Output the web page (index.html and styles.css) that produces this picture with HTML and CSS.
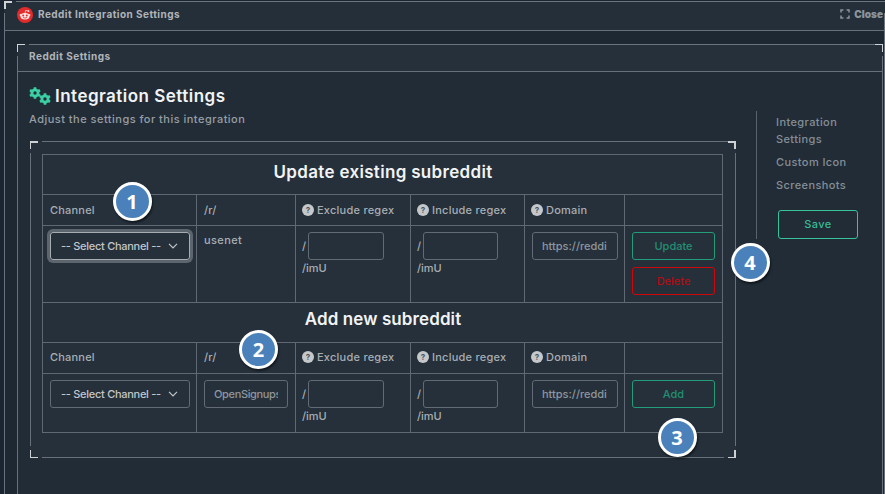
FILE: index.html
```html
<!DOCTYPE html>
<html lang="en">
<head>
<meta charset="utf-8">
<title>Reddit Integration Settings</title>
<link rel="stylesheet" href="styles.css">
</head>
<body>
<svg class="sprite" width="0" height="0" aria-hidden="true">
  <symbol id="gear" viewBox="0 0 12 12">
    <path fill="none" stroke="currentColor" stroke-width="2.6" d="M6 .2v3M6 8.8v3M1 3.1l2.5 1.5M8.500 7.400l2.500 1.500M11 3.100L8.500 4.600M3.500 7.400L1 8.900"/>
    <circle cx="6" cy="6" r="3.1" fill="none" stroke="currentColor" stroke-width="2.8"/>
  </symbol>
  <symbol id="chevron" viewBox="0 0 10 6"><path d="M1 .8l4 4 4-4" fill="none" stroke="currentColor" stroke-width="1.2"/></symbol>
</svg>
<main class="window frame">
  <header class="window-bar">
    <svg class="reddit" viewBox="0 0 16 16">
      <circle cx="8" cy="8" r="8" fill="#e32b2b"/>
      <g fill="#fbe4e4"><circle cx="3.700" cy="8" r="1.100"/><circle cx="12.300" cy="8" r="1.100"/><ellipse cx="8" cy="9.200" rx="4.500" ry="3.200"/><circle cx="11.500" cy="4.100" r=".9"/></g>
      <path d="M8 6.200l.7-2.800 2.600.6" fill="none" stroke="#fbe4e4" stroke-width=".7"/>
      <g fill="#e32b2b"><circle cx="6.200" cy="8.400" r="1"/><circle cx="9.800" cy="8.400" r="1"/></g>
      <path d="M6 10.500q2 1.200 4 0" fill="none" stroke="#e32b2b" stroke-width=".8"/>
    </svg>
    <span class="window-title">Reddit Integration Settings</span>
    <span class="close"><svg viewBox="0 0 10 10"><path d="M1 3.400V1h2.400M6.600 1H9v2.400M9 6.600V9H6.600M3.400 9H1V6.600" fill="none" stroke="currentColor" stroke-width="1.500"/></svg><b>Close</b></span>
  </header>
  <section class="panel frame">
    <h2 class="panel-title">Reddit Settings</h2>
    <div class="content">
      <div class="main">
        <h1 class="heading"><span class="gears"><svg><use href="#gear"/></svg><svg><use href="#gear"/></svg></span><span>Integration Settings</span></h1>
        <p class="lead">Adjust the settings for this integration</p>
        <div class="box frame">
          <div class="table">
            <div class="cell caption cap-update"><span>Update existing subreddit</span></div>
            <div class="cell th first">Channel</div><div class="cell th first">/r/</div>
            <div class="cell th first tip"><i>?</i>Exclude regex</div><div class="cell th first tip"><i>?</i>Include regex</div><div class="cell th first tip"><i>?</i>Domain</div><div class="cell th"></div>
            <div class="cell"><div class="select focus"><span>-- Select Channel --</span><svg><use href="#chevron"/></svg></div></div>
            <div class="cell name">usenet</div>
            <div class="cell regex"><div><span>/</span><div class="input"></div></div><p>/imU</p></div>
            <div class="cell regex"><div><span>/</span><div class="input narrow"></div></div><p>/imU</p></div>
            <div class="cell"><div class="input"><span>https://reddi</span></div></div>
            <div class="cell actions"><div class="btn">Update</div><div class="btn danger">Delete</div></div>

            <div class="cell caption cap-add"><span>Add new subreddit</span></div>
            <div class="cell th">Channel</div><div class="cell th">/r/</div>
            <div class="cell th tip"><i>?</i>Exclude regex</div><div class="cell th tip"><i>?</i>Include regex</div><div class="cell th tip"><i>?</i>Domain</div><div class="cell th"></div>
            <div class="cell"><div class="select"><span>-- Select Channel --</span><svg><use href="#chevron"/></svg></div></div>
            <div class="cell"><div class="input sub"><span>OpenSignups</span></div></div>
            <div class="cell regex"><div><span>/</span><div class="input"></div></div><p>/imU</p></div>
            <div class="cell regex"><div><span>/</span><div class="input narrow"></div></div><p>/imU</p></div>
            <div class="cell"><div class="input"><span>https://reddi</span></div></div>
            <div class="cell actions"><div class="btn">Add</div></div>
          </div>
        </div>
      </div>
      <nav class="side">
        <a>Integration Settings</a><a>Custom Icon</a><a>Screenshots</a>
        <div class="btn save">Save</div>
      </nav>
    </div>
  </section>
</main>
<div class="badge b1">1</div><div class="badge b2">2</div><div class="badge b3">3</div><div class="badge b4">4</div>
</body>
</html>
```
FILE: styles.css
```css
* { box-sizing: border-box; }
body { margin: 0; width: 885px; height: 494px; overflow: hidden; display: flow-root; background: #1b2431; color: #a9aeb3; font: 500 11px/17px Inter, "Liberation Sans", sans-serif; }
h1, h2, p { margin: 0; }
.sprite { position: absolute; }
.frame {
  --line: #68717b; --mark: #cfd2d5;
  --tlh: 1px; --tlv: 1px; --trh: 1px; --trv: 1px; --brv: 1px;
  --bottom: 1px; --right: 1px; --side: 50% / 1px calc(100% - 24px);
  background:
    linear-gradient(var(--mark), var(--mark)) 0 0 / 8px var(--tlh),
    linear-gradient(var(--mark), var(--mark)) 0 0 / var(--tlv) 8px,
    linear-gradient(var(--mark), var(--mark)) 100% 0 / 8px var(--trh),
    linear-gradient(var(--mark), var(--mark)) 100% 0 / var(--trv) 8px,
    linear-gradient(var(--mark), var(--mark)) 0 100% / 8px var(--bottom),
    linear-gradient(var(--mark), var(--mark)) 0 100% / 1px calc(var(--bottom) * 8),
    linear-gradient(var(--mark), var(--mark)) 100% 100% / 8px var(--bottom),
    linear-gradient(var(--mark), var(--mark)) 100% 100% / var(--brv) calc(var(--bottom) * 8),
    linear-gradient(var(--line), var(--line)) 12px 0 / calc(100% - 24px * var(--inset, 1)) 1px,
    linear-gradient(var(--line), var(--line)) 50% 100% / calc(100% - 24px) var(--bottom),
    linear-gradient(var(--line), var(--line)) 0 var(--side),
    linear-gradient(var(--line), var(--line)) 100% var(--side);
  background-repeat: no-repeat;
  background-color: var(--fill);
}
.window { --fill: #1e2833; --tlh: 2px; --tlv: 2px; --trh: 0px; --trv: 0px; --inset: 0; --bottom: 0px; --side: 12px / 1px 100%; margin: 1px 0 0 4px; width: 881px; height: 493px; }
.window-bar { display: flex; align-items: center; height: 30px; padding: 0 2px 3px 13px; border-bottom: 1px solid #68717b; background: rgba(255,255,255,.035); font-weight: 700; font-size: 10px; }
.reddit { width: 16px; height: 16px; margin-right: 5px; position: relative; top: 1px; }
.window-title { white-space: nowrap; letter-spacing: .45px; color: #b0b4b8; }
.close { margin-left: auto; display: flex; align-items: center; gap: 4px; color: #8d949b; }
.close svg { width: 10px; height: 10px; }
.panel { --fill: #212c37; --bottom: 0px; --side: 12px / 1px 100%; margin: 13px 0 0 13px; width: 866px; height: 450px; }
.panel-title { height: 28px; border-bottom: 1px solid #68717b; padding: 4px 12px; font-size: 10px; font-weight: 700; letter-spacing: .5px; background: rgba(255,255,255,.025); color: #b0b4b8; }
.content { display: flex; }
.main { width: 706px; margin-left: 13px; padding-top: 12px; }
.heading { display: flex; align-items: center; height: 24px; margin-left: -1px; font-size: 17px; font-weight: 600; letter-spacing: .48px; color: #f2f3f4; }
.gears { display: flex; width: 26px; height: 18px; color: #3bd0a4; }
.gears svg { width: 12px; height: 12px; }
.gears svg + svg { margin-top: 6px; margin-left: -2px; }
.lead { margin-left: -1px; height: 33px; padding-top: 3px; letter-spacing: .48px; color: #989ea4; }
.box { --fill: #25303b; --tlh: 2px; --trh: 2px; --trv: 2px; --brv: 2px; height: 317px; padding: 13px 12px; }
.table { display: grid; width: 681px; grid-template-columns: 154px 99px 115px 114px 100px 98px; grid-template-rows: 40px 31px 77px 40px 31px 59px; border: solid #606973; border-width: 1px 0 0 1px; }
.cell { min-width: 0; border: solid #606973; border-width: 0 1px 1px 0; padding: 6px 6px 0 7px; }
.caption { grid-column: 1 / -1; padding-top: 9px; text-align: center; font-size: 17px; font-weight: 600; letter-spacing: .32px; color: #f2f3f4; }
.cap-add { padding-top: 8px; letter-spacing: .1px; }
.th { white-space: nowrap; letter-spacing: .2px; }
.first { padding-top: 7px; }
.tip { display: flex; padding-left: 6px; letter-spacing: .24px; }
.tip i { width: 12px; height: 12px; margin: 2px 3px 0 0; border-radius: 50%; background: #c5c8ca; color: #4a545e; font: 700 8px/12px Inter, sans-serif; letter-spacing: 0; text-align: center; }
.select, .input, .btn { height: 28px; border: 1px solid #626b75; border-radius: 3px; }
.select { display: flex; align-items: center; justify-content: space-between; padding: 0 11px 0 10px; width: 140px; color: #c3c6c9; white-space: nowrap; letter-spacing: -.28px; }
.select svg { width: 10px; height: 6px; }
.focus { border-color: #a8adb2; box-shadow: 0 0 0 3px #5d666f; }
.name { letter-spacing: .4px; }
.regex { padding-left: 6px; }
.regex > div { display: flex; align-items: center; }
.regex .input { width: 76px; margin-left: 1px; }
.regex .narrow { width: 75px; }
.regex > div > span { width: 5px; }
.input { width: 86px; padding: 5px 9px; line-height: 17px; color: #8f969d; }
.input span { display: block; overflow: hidden; white-space: nowrap; }
.sub { width: 84px; letter-spacing: -.35px; }
.btn { width: 83px; border-color: #239c79; color: #238f71; line-height: 26px; text-align: center; }
.danger { margin-top: 7px; border-color: #d20509; color: #b30d13; }
.side { width: 104px; height: 128px; margin: 39px 0 0 20px; border-left: 1px solid #59636d; padding: 3px 0 0 19px; color: #868e96; letter-spacing: .4px; }
.side a { display: block; width: 80px; margin-bottom: 6px; }
.save { width: 80px; height: 29px; margin: 16px 0 0 2px; border-color: #37c49b; color: #37bb94; line-height: 27px; }
.badge { position: absolute; width: 39px; height: 39px; border: 3px solid #fff; border-radius: 50%; background: #4a81ba; box-shadow: 1px 2px 2px rgba(0,0,0,.5); color: #fff; font: 700 20px/33px "Open Sans", sans-serif; text-align: center; }
.b1 { left: 112.5px; top: 181.5px; }
.b2 { left: 239px; top: 329.5px; }
.b3 { left: 657.5px; top: 418px; }
.b4 { left: 730.5px; top: 242.5px; }
```
